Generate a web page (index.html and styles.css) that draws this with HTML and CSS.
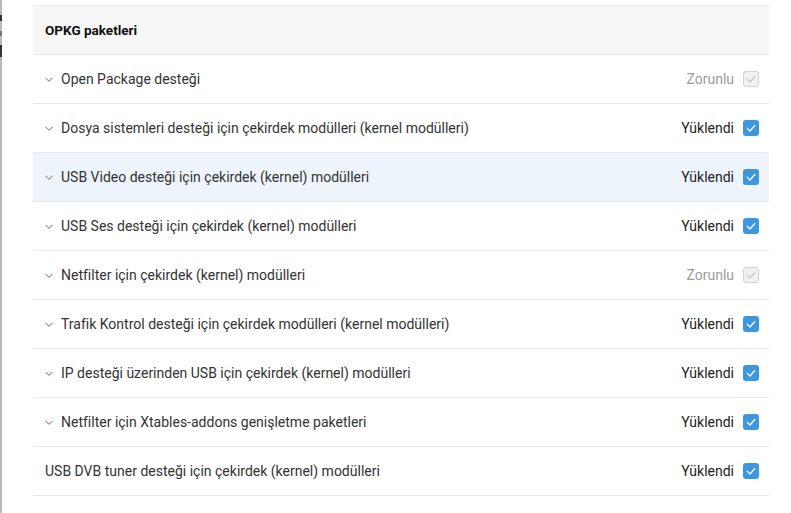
FILE: index.html
```html
<!DOCTYPE html>
<html lang="tr">
<head>
<meta charset="utf-8">
<link rel="stylesheet" href="styles.css">
</head>
<body>
<div class="edge"><span class="frag f1"></span><span class="frag f2"></span><span class="frag f3"></span></div>
<main class="main">
  <section class="panel">
    <div class="head">OPKG paketleri</div>
    <div class="row">
      <div class="label"><svg class="chev" viewBox="0 0 8 5"><path d="M0.5 0.8 L4 4.2 L7.5 0.8"/></svg>Open Package desteği</div>
      <div class="state muted">Zorunlu<span class="cb off"><svg viewBox="0 0 16 16"><path d="M4.2 8.3 L7 11 L11.8 5.5"/></svg></span></div>
    </div>
    <div class="row">
      <div class="label"><svg class="chev" viewBox="0 0 8 5"><path d="M0.5 0.8 L4 4.2 L7.5 0.8"/></svg>Dosya sistemleri desteği için çekirdek modülleri (kernel modülleri)</div>
      <div class="state">Yüklendi<span class="cb on"><svg viewBox="0 0 16 16"><path d="M4.2 8.3 L7 11 L11.8 5.5"/></svg></span></div>
    </div>
    <div class="row hl">
      <div class="label"><svg class="chev" viewBox="0 0 8 5"><path d="M0.5 0.8 L4 4.2 L7.5 0.8"/></svg>USB Video desteği için çekirdek (kernel) modülleri</div>
      <div class="state">Yüklendi<span class="cb on"><svg viewBox="0 0 16 16"><path d="M4.2 8.3 L7 11 L11.8 5.5"/></svg></span></div>
    </div>
    <div class="row">
      <div class="label"><svg class="chev" viewBox="0 0 8 5"><path d="M0.5 0.8 L4 4.2 L7.5 0.8"/></svg>USB Ses desteği için çekirdek (kernel) modülleri</div>
      <div class="state">Yüklendi<span class="cb on"><svg viewBox="0 0 16 16"><path d="M4.2 8.3 L7 11 L11.8 5.5"/></svg></span></div>
    </div>
    <div class="row">
      <div class="label"><svg class="chev" viewBox="0 0 8 5"><path d="M0.5 0.8 L4 4.2 L7.5 0.8"/></svg>Netfilter için çekirdek (kernel) modülleri</div>
      <div class="state muted">Zorunlu<span class="cb off"><svg viewBox="0 0 16 16"><path d="M4.2 8.3 L7 11 L11.8 5.5"/></svg></span></div>
    </div>
    <div class="row">
      <div class="label"><svg class="chev" viewBox="0 0 8 5"><path d="M0.5 0.8 L4 4.2 L7.5 0.8"/></svg>Trafik Kontrol desteği için çekirdek modülleri (kernel modülleri)</div>
      <div class="state">Yüklendi<span class="cb on"><svg viewBox="0 0 16 16"><path d="M4.2 8.3 L7 11 L11.8 5.5"/></svg></span></div>
    </div>
    <div class="row">
      <div class="label"><svg class="chev" viewBox="0 0 8 5"><path d="M0.5 0.8 L4 4.2 L7.5 0.8"/></svg>IP desteği üzerinden USB için çekirdek (kernel) modülleri</div>
      <div class="state">Yüklendi<span class="cb on"><svg viewBox="0 0 16 16"><path d="M4.2 8.3 L7 11 L11.8 5.5"/></svg></span></div>
    </div>
    <div class="row">
      <div class="label"><svg class="chev" viewBox="0 0 8 5"><path d="M0.5 0.8 L4 4.2 L7.5 0.8"/></svg>Netfilter için Xtables-addons genişletme paketleri</div>
      <div class="state">Yüklendi<span class="cb on"><svg viewBox="0 0 16 16"><path d="M4.2 8.3 L7 11 L11.8 5.5"/></svg></span></div>
    </div>
    <div class="row">
      <div class="label">USB DVB tuner desteği için çekirdek (kernel) modülleri</div>
      <div class="state">Yüklendi<span class="cb on"><svg viewBox="0 0 16 16"><path d="M4.2 8.3 L7 11 L11.8 5.5"/></svg></span></div>
    </div>
  </section>
</main>
</body>
</html>
```

FILE: styles.css
```css
html, body {
  margin: 0;
  padding: 0;
  background: #ffffff;
  height: 100%;
  overflow: hidden;
}
body {
  display: flex;
  font-family: Roboto, "Liberation Sans", sans-serif;
  color: #333333;
}
.edge {
  width: 2px;
  flex: none;
  background: #b9b9b9;
  position: relative;
}
.frag {
  position: absolute;
  left: 0;
  width: 2px;
  background: #333;
}
.f1 { top: 15px; height: 6px; }
.f2 { top: 31px; height: 5px; background: #777; }
.f3 { top: 45px; height: 12px; }
.main {
  flex: 1;
  padding: 5px 22px 0 31px;
}
.panel {
  border-top: 1px solid #ececec;
}
.head {
  height: 48px;
  display: flex;
  align-items: center;
  padding-left: 12px;
  background: #f7f7f7;
  font-size: 13.5px;
  font-weight: 700;
  color: #111;
  border-bottom: 1px solid #e9e9e9;
}
.row {
  height: 48px;
  display: flex;
  align-items: center;
  justify-content: space-between;
  padding: 0 10px 0 12px;
  border-bottom: 1px solid #e9e9e9;
  font-size: 14px;
}
.row.hl {
  background: #edf4fb;
}
.label {
  display: flex;
  align-items: center;
  color: #333;
}
.chev {
  width: 8px;
  height: 5px;
  margin-right: 8px;
  margin-top: 1px;
  fill: none;
  stroke: #9a9a9a;
  stroke-width: 1.1;
}
.state {
  display: flex;
  align-items: center;
  color: #222;
}
.state.muted {
  color: #9b9b9b;
}
.cb {
  width: 16px;
  height: 16px;
  margin-left: 9px;
  border-radius: 3px;
  box-sizing: border-box;
  display: flex;
}
.cb svg {
  width: 16px;
  height: 16px;
  fill: none;
  stroke-width: 1.3;
  stroke-linecap: round;
  stroke-linejoin: round;
}
.cb.on {
  background: #3c97de;
}
.cb.on svg {
  stroke: #ffffff;
}
.cb.off {
  background: #f1f1f1;
  border: 1px solid #d2d2d2;
}
.cb.off svg {
  stroke: #c8c8c8;
  margin: -1px;
}
```
